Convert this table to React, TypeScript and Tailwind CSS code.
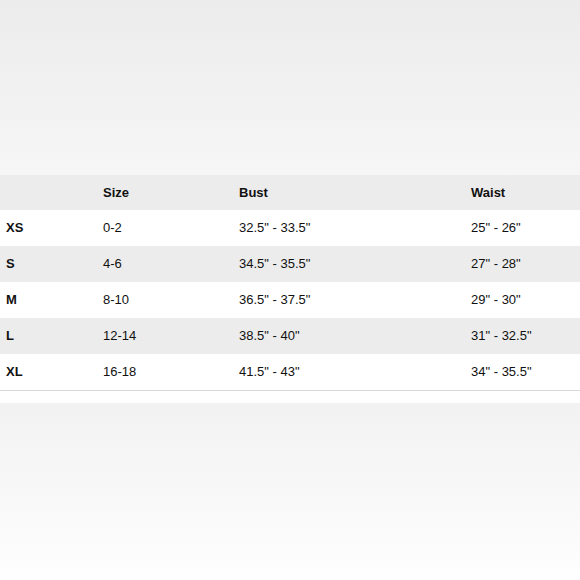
const rows = [
  { label: 'XS', size: '0-2', bust: '32.5" - 33.5"', waist: '25" - 26"' },
  { label: 'S', size: '4-6', bust: '34.5" - 35.5"', waist: '27" - 28"' },
  { label: 'M', size: '8-10', bust: '36.5" - 37.5"', waist: '29" - 30"' },
  { label: 'L', size: '12-14', bust: '38.5" - 40"', waist: '31" - 32.5"' },
  { label: 'XL', size: '16-18', bust: '41.5" - 43"', waist: '34" - 35.5"' },
]

const cols = 'grid grid-cols-[97px_136px_232px_1fr] pl-[6px] items-center'

export default function App() {
  return (
    <div className="w-[580px] h-[580px] flex flex-col bg-white text-[13px] text-[#111] font-['Liberation_Sans',Arial,sans-serif]">
      <div className="h-[175px] bg-gradient-to-b from-[#ececec] to-[#f6f6f6]" />

      {/* size chart */}
      <div className={`${cols} h-[35px] bg-[#ececec] font-bold`}>
        <div />
        <div>Size</div>
        <div>Bust</div>
        <div>Waist</div>
      </div>
      {rows.map((r, i) => (
        <div key={r.label} className={`${cols} h-[36px] ${i % 2 === 1 ? 'bg-[#ececec]' : 'bg-white'}`}>
          <div className="font-bold">{r.label}</div>
          <div>{r.size}</div>
          <div>{r.bust}</div>
          <div>{r.waist}</div>
        </div>
      ))}
      <div className="h-[13px] border-t border-[#d8d8d8] bg-white" />

      <div className="flex-1 bg-gradient-to-b from-[#f2f2f2] to-[#fefefe]" />
    </div>
  )
}
